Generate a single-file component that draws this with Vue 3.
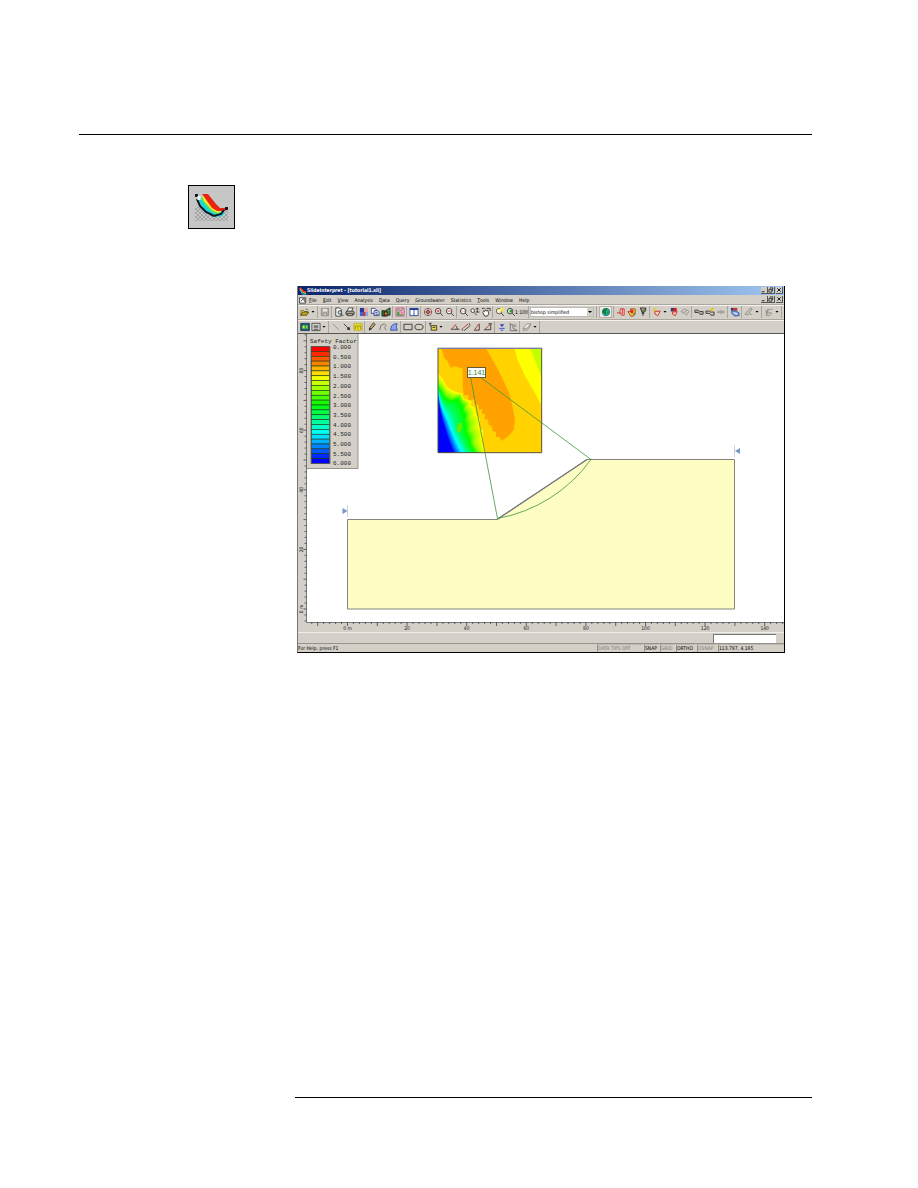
<script setup>
import { ref } from 'vue'

const method = ref('bishop simplified')
const command = ref('')
const menus = ['File', 'Edit', 'View', 'Analysis', 'Data', 'Query', 'Groundwater', 'Statistics', 'Tools', 'Window', 'Help']

const K = '#2a2826'
const R = '#c8201c'
const G = '#8c8a84'
const lens = 'M1.500 4.500a3 3 0 1 0 6 0a3 3 0 1 0 -6 0'
const handle = 'M6.800 6.800l3 3'

// Each icon is a list of [path, fill, stroke] on an 11 x 11 grid.
const icons = {
  open: [['M1 4h3l1 1h3v1.500h-5l-2 3z', '#f2e470', '#6b5a14'], ['M1 9l2-3.500h6.500l-2 3.500z', '#c8aa20', '#4c400c'], ['M6 2.500q2-1 3 1', 'none', '#666']],
  save: [['M1.500 1.500h8v8h-8z', '#b0aea8', G], ['M3 2h5v3h-5z', '#e4e2dc'], ['M3.500 7h4v2.500h-4z', '#dcdad4', G]],
  preview: [['M2 1h4l2 2v7h-6z', '#fff', K], ['M4.500 6a2 2 0 1 0 4 0a2 2 0 1 0 -4 0', '#b8dcea', K], ['M8 7.500l2.500 2.500', 'none', K]],
  print: [['M4 1h5l-2 4h-5z', '#fff', K], ['M1 5.500l1-1h7l1 1v2.500h-9z', '#a4a29c', K], ['M2.500 7.500h6v2h-6z', '#dedb9c', K]],
  grid: [['M1 1h4.500v4.500h-4.500z', '#26379c'], ['M5.500 1h4.500v4.500h-4.500z', '#e4a8a0'], ['M1 5.500h4.500v4.500h-4.500z', '#3e64d8'], ['M5.500 5.500h4.500v4.500h-4.500z', '#8ea4e0'], ['M4.500 5.500h2.500v4.500h-2.500z', '#c83434']],
  copy: [['M1.500 1.500h4l1 1v4.500h-5z', '#fff', '#243878'], ['M4.500 4h4l1.500 1.500v4h-5.500z', '#dce6fa', '#243878'], ['M6 6h2M6 8h3', 'none', '#243878']],
  city: [['M1 4h4v6h-4z', '#1f6a2c', K], ['M4 5h3v5h-3z', '#c83820', K], ['M6 3l4-2v8h-3z', '#2a8434', K], ['M4.500 7h2M8 4h1', 'none', '#f4d430']],
  picture: [['M1 1h9v9h-9z', '#f6b8d0', '#c05088'], ['M2 9v-4h3v3h4v1.500h-7z', '#48a452'], ['M2 4l2-1.500 2 2 3-3', 'none', '#2c6840'], ['M6 5h3v3h-3z', '#f08aa8']],
  tile: [['M1 1.500h9v8h-9z', '#fff', '#1c3696'], ['M1 1.500h9v1.800h-9z', '#1c3696'], ['M5.500 2v7.500', 'none', '#1c3696']],
  zoomAll: [['M1.500 5.500a4 4 0 1 0 8 0a4 4 0 1 0 -8 0', '#fff', '#55403c'], ['M5.500 1v9M1 5.500h9', 'none', R], ['M4 4h3v3h-3z', 'none', '#553030']],
  zoomIn: [[lens, '#fff', K], [handle, 'none', K], ['M2.700 4.500h3.600M4.500 2.700v3.600', 'none', R]],
  zoomOut: [[lens, '#fff', K], [handle, 'none', K], ['M2.700 4.500h3.600', 'none', R]],
  zoomWin: [[lens, '#fff', K], [handle, 'none', K], ['M2.800 4.500h1.200M5.200 4.500h1.200', 'none', R]],
  zoomPan: [['M1 4a2 2 0 1 0 4 0a2 2 0 1 0 -4 0', '#fff', K], ['M4.500 6l3 3M8 1v5M6.500 2.500l1.500-1.500 1.500 1.500M6.500 5.500h4', 'none', K]],
  pan: [['M2 6l1-2 1 1 1-2 1 1.500 1.500-1 1 4-1.500 2.500h-3z', '#fff', K], ['M6 1.500h4v3M1 1.500h3', 'none', K]],
  zoomYellow: [[lens, '#f2f0d8', '#55522c'], [handle, 'none', K], ['M5.500 1h4v4h-4z', '#f2e848']],
  zoomGreen: [[lens, '#e2f0e0', K], [handle, 'none', K], ['M4 3h3v3h-3z', '#28a038']],
  globe: [['M1.500 5.500a4 4 0 1 0 8 0a4 4 0 1 0 -8 0', '#28b4c0', '#146472'], ['M3 2.500l3-1 1 2-2 1 1 2-1 2-3-3z', '#157a2c'], ['M7 4l2 1-1 3-2 0z', '#239c3c']],
  slip1: [['M5 2h4v7h-3l-2-3z', '#f8d4ce', R], ['M1 6.500h5M7 2v6', 'none', R]],
  slip2: [['M1 5h3v-3h5v5l-2 3h-3z', '#f0d43c', '#b02818'], ['M4 3h3v4h-3z', '#d42c24'], ['M6 8l3-2v3z', '#3c9838']],
  filter: [['M2.500 1h6v3l-2 2h-2z', '#4c8848', K], ['M4 1.500h3v2h-3z', '#d87898'], ['M5.500 6v4M4 7h3', 'none', K]],
  query: [['M3 5l6-.5-2.500 5-3-1.500z', '#f8d0c0', R], ['M1 1l3 3M1 4h4M4 .5v4', 'none', '#e4c81c']],
  queryDel: [['M2 1h4v4h-4z', '#2c3d82'], ['M4.500 1h4v3.500h-4z', R], ['M4 5.500l5-.5-2 4.500-3-1.500z', '#f8c8bc', R]],
  queryGrey: [['M1 5l4-3 5 3-3 4-3-3z', '#d8d5cd', G], ['M3 7l5-4M6 5l2 2', 'none', G]],
  mass: [['M1 3.500h3.500l1.500 1.500h4v3h-3.500l-1.500-2h-4z', '#bcb8b0', K]],
  massYellow: [['M1 4.500h3.500l1.500 1h4v3.500h-3.500l-1.500-2h-4z', '#cac6be', K], ['M6 1h3v3.500h-3z', '#edd834'], ['M5 5l4-4', 'none', '#b89a20']],
  massGrey: [['M1 5.500h9M3 4v3M5.500 3v5M8 4v3', 'none', G]],
  layers: [['M1 1h3v3h-3z', '#26367c'], ['M4 1h4v3h-4z', '#cb3030'], ['M2 4.500h5l3 2v3l-5 .5-3-3z', '#86a9e6', '#2d468b'], ['M4 6l4 2', 'none', '#fff']],
  wand: [['M1 8l3 1 5-7-2-1zM6 8h3', '#c8c5be', G]],
  chart: [['M1.500 4.500h3l1-2h4M2.500 4.500v5h4l2-3h-6M4 2v6', 'none', G]],
  view: [['M.8 1.500h9.500v8h-9.500z', '#1b498a', '#223060'], ['M2 3h7v5h-7z', '#2aa43c'], ['M3 4h2v3h-2zM7 4h1v3h-1z', '#dce650']],
  snap: [['M1 1.500h9v8h-9z', '#d8d6d0', '#444'], ['M3 3.500h5v3h-5z', '#777'], ['M3 8h5', 'none', K]],
  line: [['M2 2l7 7', 'none', G]],
  arrow: [['M2 2l5 5', 'none', K], ['M9 9l-1-4-3 3z', K]],
  dims: [['M1 2h9v7h-9z', '#f4ec2c', '#b4a418'], ['M2.500 5v3M5.500 5v3M8.500 5v3M2 4.500h7', 'none', '#7c7520']],
  pencil: [['M2.500 8l1-2.500 3.500-4.500 2 1.500-3.500 4.500z', '#c8b068', K], ['M2 9.500l1-3 2 1.500z', K]],
  polyline: [['M2 9l1-5 4-2 2 2-2 2 2 3', 'none', '#666']],
  polygon: [['M1.500 9l1.500-5 3-2h3l-1 3 1 4z', '#8aa4e6', '#2c46a8']],
  rect: [['M1 2.500h9v6h-9z', 'none', K]],
  ellipse: [['M1 5.500a4.500 3 0 1 0 9 0a4.500 3 0 1 0 -9 0', 'none', K]],
  label: [['M3.500 4h6v5h-6z', '#e8dc48', K], ['M1 1.500h3M2.500 1.500v3', 'none', K], ['M5 6h3', 'none', K]],
  angle1: [['M1 8h9.500M6 4q2 1 2 4', 'none', K], ['M1.500 8l5-5.500', 'none', R]],
  angle2: [['M2 9.500l-1-2M10 3.500l-1-2M3.500 9.500l6.500-5.500', 'none', K], ['M1.500 7.500l6.500-5.500', 'none', R]],
  angle3: [['M2.500 9h5.500v-7', 'none', K], ['M2.500 9l5-7', 'none', R]],
  angle4: [['M1 8.500h7.500M8.500 2v6.500M6 2h4', 'none', K], ['M2 8l6-5.500', 'none', R]],
  water: [['M3 2.500h5l-2.500 3z', '#2040c4'], ['M2.500 7h6M4 9h3', 'none', '#2040c4']],
  axes: [['M2.500 1v8.500h8M2.500 3h3v4l4 2', 'none', '#666'], ['M6.500 3h2v2h-2z', 'none', G]],
  eraser: [['M1.500 7l4-5h4l-4 5z', '#efede8', G], ['M1.500 7v2h4l4-5v-2', 'none', G]],
}

const bar1 = ['open', '^', '|', 'save', '|', 'preview', 'print', '|', 'grid', 'copy', 'city', '|', 'picture', '|', 'tile', '|', 'zoomAll', 'zoomIn', 'zoomOut', '|', 'zoomWin', 'zoomPan', 'pan', '|', 'zoomYellow', 'zoomGreen', '1:100', '|']
const bar1b = ['||', 'globe', '|', 'slip1', 'slip2', 'filter', '|', 'query', '^', 'queryDel', 'queryGrey', '|', 'mass', 'massYellow', 'massGrey', '|', 'layers', '|', 'wand', '^', '|', 'chart', '^', '|']
const bar2 = ['view', 'snap', '^', '|', 'line', 'arrow', 'dims', '|', 'pencil', 'polyline', 'polygon', '|', 'rect', 'ellipse', '|', 'label', '^', '||', 'angle1', 'angle2', 'angle3', 'angle4', '|', 'water', 'axes', '|', 'eraser', '^', '|']

const panels = [
  { t: 'DATA TIPS OFF', c: 'tips off' },
  { t: 'SNAP', c: 'snap' },
  { t: 'GRID', c: 'snap off' },
  { t: 'ORTHO', c: 'ortho' },
  { t: 'OSNAP', c: 'ortho off' },
  { t: '113.797, 4.165', c: 'coords' },
]

// Rulers: 2.98 drawing units per metre, origin at (347.5, 609).
const unit = 2.98
const X = m => 347.5 + m * unit
const Y = m => 609 - m * unit
const range = (a, b, s) => Array.from({ length: Math.floor((b - a) / s) + 1 }, (_, i) => a + i * s)
const xTicks = range(-12, 146, 2)
const yTicks = range(-4, 92, 2)
const xLabels = range(0, 140, 20)
const yLabels = range(0, 80, 20)

const bands = range(0, 23, 1).map(i => ({ y: 346.5 + i * 4.875, c: `hsl(${Math.round(i * 240 / 23)} 100% 50%)` }))
const levels = range(0, 12, 1).map(i => ({ y: 349 + i * 9.7, t: (i / 2).toFixed(3) }))

// Safety-factor contours in the lower left of the grid, interpolated between key curves.
const keys = [
  { h: 60, p: [[24, 100], [38, 118], [50, 140], [75, 155], [96, 160], [101, 176], [125, 184], [121, 194], [134, 203], [139, 224], [150, 236], [149, 260], [160, 274], [157, 300], [166, 338]] },
  { h: 90, p: [[24, 128], [38, 142], [48, 160], [68, 172], [90, 165], [98, 182], [109, 192], [106, 204], [117, 216], [115, 232], [123, 248], [121, 268], [132, 286], [131, 308], [148, 338]] },
  { h: 120, p: [[24, 139], [34, 155], [42, 172], [60, 184], [84, 178], [92, 192], [99, 202], [98, 214], [107, 226], [104, 242], [108, 258], [108, 276], [118, 294], [121, 314], [136, 338]] },
  { h: 150, p: [[24, 148], [31, 167], [36, 182], [46, 198], [58, 208], [64, 220], [70, 228], [72, 238], [76, 248], [78, 262], [82, 274], [89, 290], [97, 304], [104, 318], [116, 338]] },
  { h: 180, p: [[24, 155], [29, 174], [33, 192], [40, 208], [46, 222], [52, 234], [57, 242], [60, 252], [64, 262], [68, 272], [73, 284], [79, 298], [85, 310], [91, 322], [99, 338]] },
  { h: 235, p: [[24, 170], [27, 190], [30, 204], [33, 220], [37, 234], [40, 245], [43, 255], [46, 264], [49, 274], [52, 284], [56, 295], [60, 306], [64, 316], [68, 326], [74, 338]] },
]
const contours = []
keys.forEach((k, i) => {
  const n = keys[i + 1]
  const steps = n ? 5 : 1
  for (let s = 0; s < steps; s++) {
    const f = s / steps
    const pts = k.p.map(([x, y], j) => n ? [x + (n.p[j][0] - x) * f, y + (n.p[j][1] - y) * f] : [x, y])
    contours.push({
      c: `hsl(${n ? k.h + (n.h - k.h) * f : 240} 100% 50%)`,
      d: 'M24 338L' + pts.map(p => p.map(v => v.toFixed(1)).join(' ')).join('L') + 'Z',
    })
  }
})
</script>

<template>
  <main class="page">
    <hr class="rule">
    <div class="tool-figure">
      <svg viewBox="0 0 45 42" role="img" aria-label="Interpret">
        <defs>
          <pattern id="checks" width="4" height="4" patternUnits="userSpaceOnUse">
            <path d="M0 0h2v2h-2zM2 2h2v2h-2z" fill="#a4a4a4" />
          </pattern>
        </defs>
        <path d="M6 21h6l7 8 12 1 8-7v12H6z" fill="url(#checks)" />
        <path d="M9 12l5 0 9 10 4 4h9l-3 4-6 1-9-4-6-8z" fill="#16d8d8" />
        <path d="M11 12l3-1 11 12 5 2h4l-4 3-6-1-8-8z" fill="#58e468" />
        <path d="M13 10l4 1 8 11 6 2h3l-5 3-6-3-8-9z" fill="#ffe628" />
        <path d="M13 8h6l8 10 4 4h7l-2 3h-8l-5-3z" fill="#e82410" />
        <path d="M8 13l3 7 6 6 8 4 7-2 3-4" fill="none" stroke="#101828" stroke-width="2" />
        <path d="M6 8h3v3h-3zM36 21h3v3h-3z" fill="#101828" />
        <path d="M10 10v4" stroke="#e8ffff" stroke-width="3" />
      </svg>
    </div>

    <section class="window" aria-label="SlideInterpret">
      <header class="title">
        <svg class="logo" viewBox="0 0 9 9"><path d="M1 1l4 4 3 1" fill="none" stroke="#e83020" stroke-width="2" /><path d="M1 2l3 4 4 1.500" fill="none" stroke="#ffe850" /><path d="M1 3l3 5h4" fill="none" stroke="#30d8d8" /></svg>
        <h1>SlideInterpret - [tutorial1.sli]</h1>
        <div class="controls">
          <button aria-label="Minimize"><svg viewBox="0 0 7 7"><path d="M1 5.500h3" stroke="#000" /></svg></button>
          <button aria-label="Restore"><svg viewBox="0 0 7 7"><path d="M2.500 2v-1h3v3h-1M1 3h3.500v3h-3.500z" fill="none" stroke="#000" stroke-width=".8" /></svg></button>
          <button class="close" aria-label="Close"><svg viewBox="0 0 7 7"><path d="M1.500 1.500l4 4M5.500 1.500l-4 4" stroke="#000" /></svg></button>
        </div>
      </header>

      <nav class="menu" aria-label="Main menu">
        <svg class="doc" viewBox="0 0 9 9"><path d="M.5 2h7v6h-7z" fill="#fff" stroke="#333" /><path d="M4 2h4v5h-2z" fill="#777" /><path d="M2 6l3-3" stroke="#333" /></svg>
        <button v-for="m in menus" :key="m"><u>{{ m[0] }}</u>{{ m.slice(1) }}</button>
        <div class="controls">
          <button aria-label="Minimize document"><svg viewBox="0 0 7 7"><path d="M1 5.500h3" stroke="#000" /></svg></button>
          <button aria-label="Restore document"><svg viewBox="0 0 7 7"><path d="M2.500 2v-1h3v3h-1M1 3h3.500v3h-3.500z" fill="none" stroke="#000" stroke-width=".8" /></svg></button>
          <button class="close" aria-label="Close document"><svg viewBox="0 0 7 7"><path d="M1.500 1.500l4 4M5.500 1.500l-4 4" stroke="#000" /></svg></button>
        </div>
      </nav>

      <div class="toolbar" role="toolbar" aria-label="Standard">
        <template v-for="(b, i) in bar1" :key="i">
          <i v-if="b === '|'" class="sep" />
          <button v-else-if="b === '^'" class="caret" aria-label="More"><svg viewBox="0 0 6 4"><path d="M1.500 1h3l-1.500 1.800z" /></svg></button>
          <button v-else-if="b === '1:100'" class="tool ratio">1:100</button>
          <button v-else class="tool" :aria-label="b">
            <svg viewBox="0 0 11 11"><path v-for="(p, j) in icons[b]" :key="j" :d="p[0]" :fill="p[1]" :stroke="p[2] || 'none'" stroke-width=".9" /></svg>
          </button>
        </template>
        <div class="combo">
          <select v-model="method" aria-label="Analysis method"><option>bishop simplified</option></select>
          <svg viewBox="0 0 6 8"><path d="M1 3h4l-2 2z" /></svg>
        </div>
        <template v-for="(b, i) in bar1b" :key="'b' + i">
          <i v-if="b[0] === '|'" class="sep" :class="{ wide: b === '||' }" />
          <button v-else-if="b === '^'" class="caret" aria-label="More"><svg viewBox="0 0 6 4"><path d="M1.500 1h3l-1.500 1.800z" /></svg></button>
          <button v-else class="tool" :class="{ pressed: b === 'globe' }" :aria-label="b">
            <svg viewBox="0 0 11 11"><path v-for="(p, j) in icons[b]" :key="j" :d="p[0]" :fill="p[1]" :stroke="p[2] || 'none'" stroke-width=".9" /></svg>
          </button>
        </template>
      </div>

      <div class="toolbar second" role="toolbar" aria-label="Drawing">
        <template v-for="(b, i) in bar2" :key="i">
          <i v-if="b[0] === '|'" class="sep" :class="{ none: b === '||' }" />
          <button v-else-if="b === '^'" class="caret" aria-label="More"><svg viewBox="0 0 6 4"><path d="M1.500 1h3l-1.500 1.800z" /></svg></button>
          <button v-else class="tool" :aria-label="b">
            <svg viewBox="0 0 11 11"><path v-for="(p, j) in icons[b]" :key="j" :d="p[0]" :fill="p[1]" :stroke="p[2] || 'none'" stroke-width=".9" /></svg>
          </button>
        </template>
      </div>

      <svg class="drawing" viewBox="298 333 486 299" role="img" aria-label="Slope model with safety factor contours">
        <rect x="298" y="333" width="486" height="299" fill="#d4d0c8" />
        <rect x="307" y="334" width="477" height="288" fill="#fff" />
        <path d="M298 333.500h486" stroke="#555" />
        <path d="M306.500 334v288.500h477.500" fill="none" stroke="#777" />
        <path v-for="m in xTicks" :key="'x' + m" :d="`M${X(m)} 622v${m % 10 ? 2 : 4}`" stroke="#444" stroke-width=".8" />
        <path v-for="m in yTicks" :key="'y' + m" :d="`M306.500 ${Y(m)}h${m % 10 ? -2 : -3}`" stroke="#444" stroke-width=".8" />
        <text v-for="m in xLabels" :key="'xl' + m" class="num" :x="X(m)" y="630">{{ m || '0 m' }}</text>
        <text v-for="m in yLabels" :key="'yl' + m" class="num" :transform="`translate(303 ${Y(m)}) rotate(-90)`">{{ m || '0 m' }}</text>

        <path d="M347.500 519.500H497L587 459.500H734.500V609H347.500Z" fill="#fdfdc4" stroke="#85857c" />
        <path d="M497 519.500L587 459.500" stroke="#777" stroke-width="1.300" />
        <path d="M347.500 505v12M734.500 445v12" stroke="#ccd3df" />
        <path d="M342.500 508v6l5-3zM740 448v6l-5-3z" fill="#7696cc" />

        <g transform="translate(430 340) scale(.33333)">
          <path d="M24 25H335V338H24Z" fill="#ffd200" />
          <path d="M253 25L262 58 285 108 312 154 335 198V25Z" fill="#ff0" />
          <path d="M300 25L318 68 335 112V25Z" fill="#c4ff00" />
          <path d="M34 25H168L186 56 205 90 224 130 238 160 248 200 255 242 251 270 238 286 215 303 208 290 199 292 197 276 187 272 185 258 176 254 174 240 163 236 166 224 155 220 157 206 148 210 145 194 133 192 133 178 116 180 115 164 102 166 98 140V86L76 79 62 83 52 62 43 54Z" fill="#ffa200" />
          <path v-for="(c, i) in contours" :key="i" :d="c.d" :fill="c.c" />
          <path d="M80 262L88 248 98 250 96 268 86 280 81 274Z" fill="#60f000" />
          <path d="M24 25H335V338H24Z" fill="none" stroke="#55503c" stroke-width="3" />
          <path d="M23 25H337" stroke="#7c7cc0" stroke-width="3" />
        </g>

        <path d="M470.500 377L497.500 518.500A148 148 0 0 0 591 459.500L480 377" fill="none" stroke="#3c9440" stroke-width=".8" />
        <rect x="467.500" y="367.500" width="18" height="10" fill="#fff" stroke="#665a38" />
        <text class="factor" x="476.500" y="375">1.141</text>

        <g>
          <rect x="307" y="334" width="51" height="135" fill="#d4d0c8" />
          <path d="M307 468.500h51v-134.500" fill="none" stroke="#96938d" />
          <text class="mono" x="310" y="343">Safety Factor</text>
          <rect v-for="b in bands" :key="b.y" x="311.500" :y="b.y" width="18" height="4.875" :fill="b.c" stroke="#1c3818" stroke-width=".6" />
          <path d="M311 346.500h19v117h-19z" fill="none" stroke="#555" stroke-width=".8" />
          <text v-for="l in levels" :key="l.t" class="mono" x="333" :y="l.y">{{ l.t }}</text>
        </g>
      </svg>

      <div class="entry"><input v-model="command" aria-label="Coordinates"></div>

      <footer class="status">
        <span class="help">For Help, press F1</span>
        <span v-for="p in panels" :key="p.t" class="panel" :class="p.c">{{ p.t }}</span>
      </footer>
    </section>

    <hr class="rule foot">
  </main>
</template>

<style>
body { background: #fff; }
</style>

<style scoped>
* { box-sizing: border-box; }
.page { padding: 134px 106px 90px 79px; font: 5px/8px "DejaVu Sans Condensed", "DejaVu Sans", sans-serif; color: #000; }
.rule { margin: 0; border: 0; border-top: 1px solid #000; }
.foot { margin: 444px 0 0 216px; }
.tool-figure { width: 47px; height: 44px; margin: 50px 0 57px 109px; border: 1px solid #000; background: #c6c6c6; }
.tool-figure svg { display: block; width: 100%; height: 100%; }
.window { margin: 0 27px 0 218px; border: solid #000; border-width: 0 1px 1px 0; border-left: 1px solid #777; background: #d4d0c8; overflow: hidden; }
button { display: flex; align-items: center; justify-content: center; margin: 0; padding: 0; border: 0; background: none; color: inherit; font: inherit; flex: none; }
svg { display: block; }
.title { display: flex; align-items: center; height: 9px; padding: 0 1px; background: linear-gradient(90deg, #0a246a, #a0c6f0); color: #fff; }
.title h1 { margin: 0 auto 0 0; font-size: 5px; line-height: 9px; font-weight: 700; white-space: nowrap; }
.logo { width: 8px; height: 8px; flex: none; }
.controls { display: flex; margin-left: auto; flex: none; }
.controls button { width: 7px; height: 7px; background: #d4d0c8; border: solid #555; border-width: 0 1px 1px 0; }
.controls .close { margin-left: 1px; }
.controls svg { width: 6px; height: 6px; }
.menu { display: flex; align-items: center; gap: 6px; height: 9px; padding: 0 1px; }
.menu u { text-decoration-thickness: 1px; text-underline-offset: 0; text-decoration-color: #888; }
.doc { width: 8px; height: 8px; flex: none; margin-right: -4px; }
.toolbar { display: flex; align-items: center; height: 15px; padding-left: 1px; border-top: 1px solid #aaa69e; box-shadow: inset 0 1px #f4f2ee; }
.second { height: 14px; }
.tool { width: 11px; height: 12px; }
.tool svg { width: 10px; height: 10px; }
.ratio { font-size: 5px; }
.pressed { width: 13px; background: #ece9e2; border: 1px solid #b4b1aa; }
.caret { width: 6px; height: 11px; }
.caret svg { width: 6px; height: 4px; }
.sep { flex: none; width: 1px; height: 12px; margin: 0 1px; background: #a8a59e; }
.wide { margin: 0 2px; }
.none { width: 3px; background: none; }
.combo { display: flex; align-items: center; width: 64px; height: 10px; flex: none; background: #fff; border: 1px solid #bbb; }
.combo select { appearance: none; flex: 1; min-width: 0; height: 8px; padding: 0; border: 0; background: none; color: #000; font: inherit; }
.combo svg { width: 6px; height: 8px; background: #d4d0c8; flex: none; }
.drawing { width: 100%; height: auto; }
.num { font-size: 5px; text-anchor: middle; fill: #222; }
.mono { font: 6px "Liberation Mono", monospace; fill: #222; }
.factor { font: 7px "Liberation Sans", sans-serif; text-anchor: middle; fill: #2f8a36; }
.entry { display: flex; justify-content: flex-end; height: 11px; padding: 1px 8px 1px 0; border-top: 1px solid #efede8; }
.entry input { width: 63px; height: 9px; padding: 0 1px; border: solid #777; border-width: 1px 0 0 1px; background: #fff; font: inherit; }
.status { display: flex; align-items: center; gap: 2px; height: 9px; border-top: 1px solid #96938c; }
.help { margin-right: auto; white-space: nowrap; }
.panel { flex: none; height: 8px; border-left: 1px solid #96938c; border-top: 1px solid #bbb7b0; line-height: 7px; white-space: nowrap; }
.off { color: #7c7973; }
.tips { width: 45px; }
.snap { width: 14px; }
.ortho { width: 19px; }
.coords { width: 66px; }
</style>
